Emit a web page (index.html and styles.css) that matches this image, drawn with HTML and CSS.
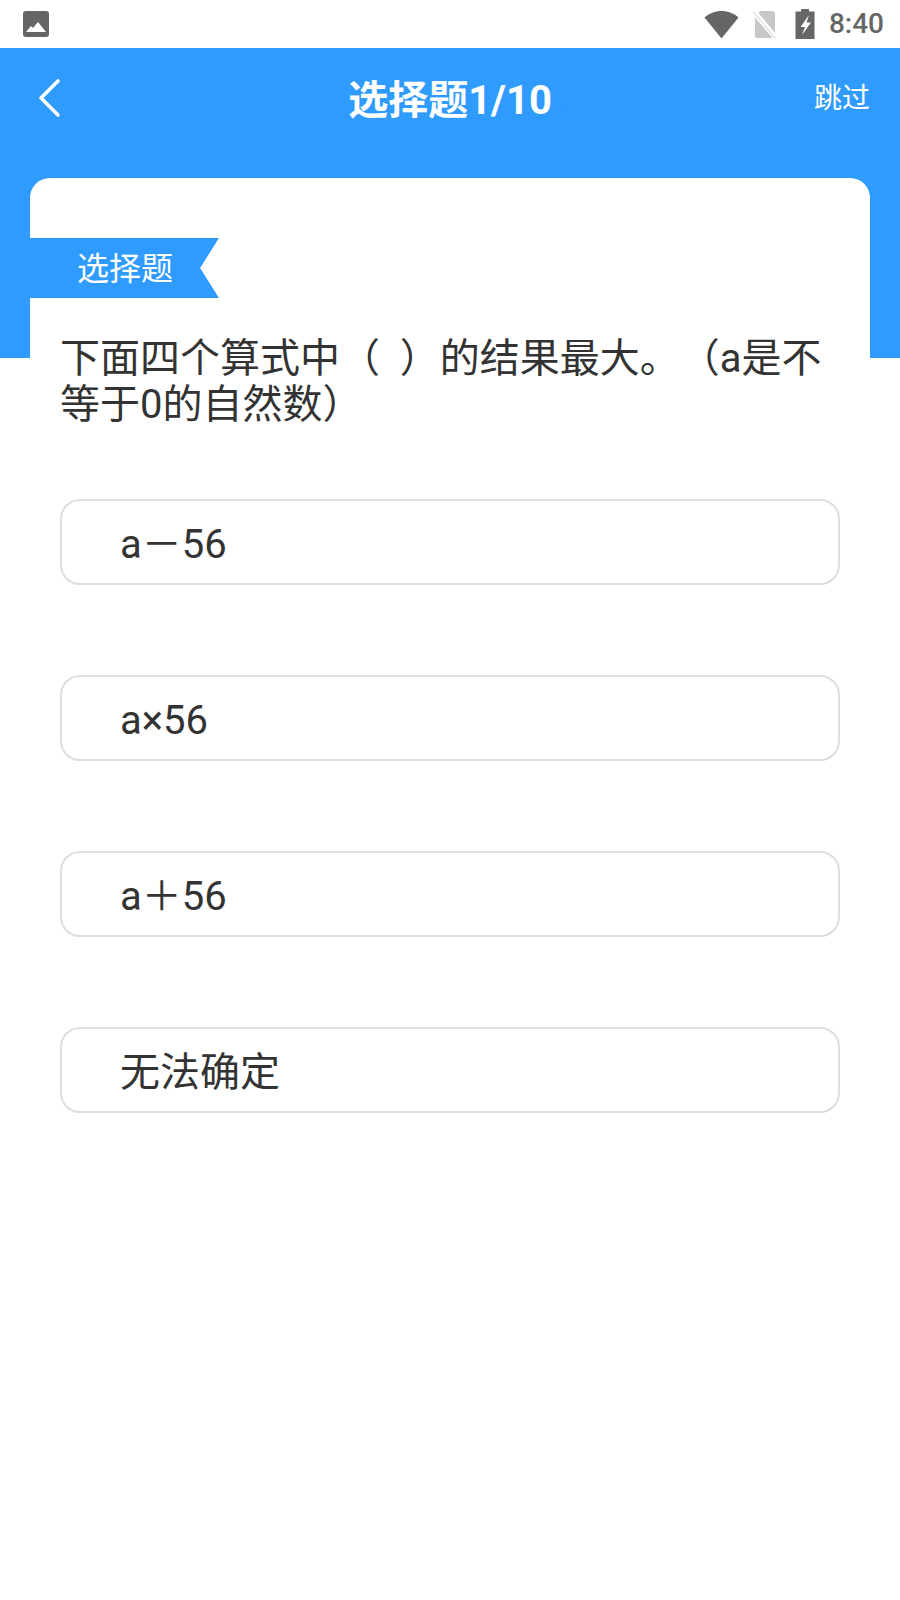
FILE: index.html
```html
<!DOCTYPE html>
<html lang="zh-CN">
<head>
<meta charset="utf-8">
<title>选择题</title>
<link rel="stylesheet" href="styles.css">
</head>
<body>
<div class="status">
  <svg class="ic-photo" viewBox="0 0 26 26" width="26" height="26"><rect width="26" height="26" rx="3" fill="#666"/><path d="M3 21l5-6 2 2 5-6 8 10z" fill="#fff"/></svg>
  <div class="status-right">
    <svg class="ic-wifi" viewBox="0 0 35 29" width="35" height="29"><path d="M17.5 28.500L0.500 7.500C5 3.500 11 1 17.500 1s12.500 2.500 17 6.500z" fill="#666"/></svg>
    <svg class="ic-sim" viewBox="0 0 26 29" width="26" height="29"><path d="M8 1h12a3 3 0 0 1 3 3v19L6.500 3zM3 7.500L20.500 28H5a2 2 0 0 1-2-2z" fill="#c8c8c8"/><path d="M1 1.500l22.500 27" stroke="#e4e4e4" stroke-width="1.500"/></svg>
    <svg class="ic-batt" viewBox="0 0 20 30" width="20" height="30"><path d="M6 0h8v2.500h5.500V30H.500V2.500H6z" fill="#666"/><path d="M14 6L5.500 18H10l-3 8 9-12.500h-4.500L14 6z" fill="#fff"/></svg>
    <span class="time">8:40</span>
  </div>
</div>
<header class="hero">
  <div class="nav">
    <svg class="back" viewBox="0 0 24 40" width="24" height="40"><path d="M21 3L4 20l17 17" fill="none" stroke="#fff" stroke-width="3.600" stroke-linecap="round" stroke-linejoin="round"/></svg>
    <h1 class="title">选择题1/10</h1>
    <i class="speck"></i>
    <span class="skip">跳过</span>
  </div>
</header>
<main class="card">
  <div class="ribbon">选择题</div>
  <p class="question">下面四个算式中（&nbsp; ）的结果最大。（a是不等于0的自然数）</p>
  <div class="options">
    <div class="option">a－56</div>
    <div class="option">a×56</div>
    <div class="option">a＋56</div>
    <div class="option">无法确定</div>
  </div>
</main>
</body>
</html>
```
FILE: styles.css
```css
* { box-sizing: border-box; }
html, body { margin: 0; padding: 0; background: #fff; }
body {
  width: 900px;
  height: 1600px;
  overflow: hidden;
  font-family: Roboto, "Noto Sans CJK SC", sans-serif;
  color: #333;
  text-spacing-trim: space-all;
}
.status {
  height: 48px;
  display: flex;
  align-items: center;
  justify-content: space-between;
  padding: 0 16px 0 23px;
}
.status-right { display: flex; align-items: center; }
.ic-photo { display: block; }
.ic-wifi { margin-right: 13px; }
.ic-sim { margin-right: 17px; }
.ic-batt { margin-right: 14px; }
.time { font-size: 28px; font-weight: 500; color: #666; line-height: 48px; }
.hero { height: 310px; background: #2f9bff; }
.nav {
  height: 100px;
  display: flex;
  align-items: center;
  justify-content: space-between;
  padding: 0 30px 0 37px;
  position: relative;
}
.back { display: block; }
.title {
  margin: 0;
  font-size: 40px;
  font-weight: 700;
  color: #fff;
  position: absolute;
  top: 0;
  left: 0;
  right: 0;
  text-align: center;
  line-height: 106px;
}
.speck {
  position: absolute;
  left: 561px;
  top: 61px;
  width: 1px;
  height: 1px;
  background: #2a78c4;
}
.skip { font-size: 28px; color: #fff; line-height: 40px; margin-top: 2px; }
.card {
  margin: -180px 30px 0;
  height: 1000px;
  background: #fff;
  border-radius: 20px 20px 0 0;
  padding-top: 60px;
  position: relative;
}
.ribbon {
  width: 189px;
  height: 60px;
  background: #2f9bff;
  color: #fff;
  font-size: 32px;
  line-height: 63px;
  padding-left: 47px;
  clip-path: polygon(0 0, 100% 0, 90% 50%, 100% 100%, 0 100%);
}
.question {
  margin: 38px 30px 0;
  font-size: 40px;
  line-height: 46px;
  color: #333;
}
.options {
  margin: 71px 30px 0;
  display: flex;
  flex-direction: column;
  gap: 90px;
}
.option {
  height: 86px;
  border: 2px solid #dedede;
  border-radius: 20px;
  padding-left: 58px;
  font-size: 40px;
  line-height: 88px;
  color: #333;
}
```
